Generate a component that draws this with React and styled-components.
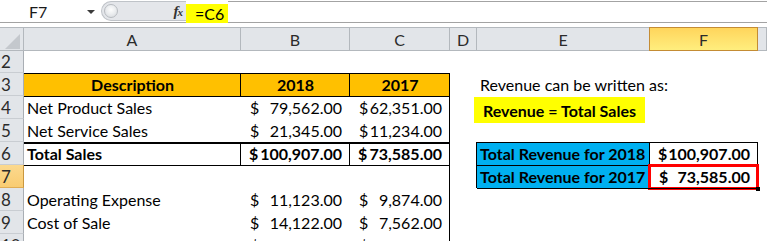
import React from "react"
import styled, { createGlobalStyle, css } from "styled-components"

const GlobalStyle = createGlobalStyle`
  html, body {
    margin: 0;
    padding: 0;
    background: #fff;
    overflow: hidden;
  }
  body {
    font-family: Lato, "Liberation Sans", sans-serif;
    color: #000;
  }
  * { box-sizing: border-box; }
`

const Window = styled.div`
  width: 767px;
  height: 241px;
  overflow: hidden;
  background: #fff;
`

/* ---------- formula bar ---------- */

const FormulaBar = styled.div`
  display: flex;
  height: 23px;
  margin-bottom: 4px;
  border-bottom: 1px solid #a3a3a3;
`

const NameBox = styled.div`
  width: 101px;
  display: flex;
  align-items: center;
  padding-left: 29px;
  font-size: 16px;
  color: #1a1a1a;
`

const DropArrow = styled.span`
  margin-left: auto;
  margin-right: 6px;
  margin-top: 2px;
  border-left: 4px solid transparent;
  border-right: 4px solid transparent;
  border-top: 4px solid #3a3a3a;
`

const FxArea = styled.div`
  width: 85px;
  height: 20px;
  margin-top: 1px;
  display: flex;
  align-items: center;
  justify-content: space-between;
  padding: 0 4px 0 2px;
  background: #e4e6ea;
  border: 1px solid #bfc3c8;
  border-right: none;
  border-radius: 10px 0 0 10px;
`

const Knob = styled.span`
  width: 14px;
  height: 14px;
  border-radius: 50%;
  border: 1px solid #b8bcc1;
  background: radial-gradient(circle at 50% 40%, #fdfdfd 0, #eceef0 45%, #d4d7db 100%);
`

const FxLabel = styled.span`
  font-family: "Liberation Serif", serif;
  font-style: italic;
  font-weight: bold;
  font-size: 15px;
  color: #333;
  letter-spacing: -1px;

  small {
    font-size: 11px;
  }
`

const Formula = styled.div`
  width: 42px;
  height: 19px;
  margin-top: 4px;
  margin-bottom: -1px;
  padding-left: 9px;
  display: flex;
  align-items: center;
  background: #ffff00;
  font-size: 16px;
`

const FormulaRest = styled.div`
  flex: 1;
  margin-top: 1px;
  border-top: 1px solid #a3a3a3;
`

/* ---------- sheet ---------- */

const Sheet = styled.div`
  display: grid;
  grid-template-columns: 24px 217px 109px 100px 27px 173px 108px 9px;
  grid-template-rows: 24px 22px;
  grid-auto-rows: 23px;
`

const headBase = css`
  display: flex;
  align-items: center;
  color: #2b2b2b;
  font-size: 16px;
  background: #e2e5e9;
`

const Corner = styled.div`
  ${headBase};
  justify-content: center;
  border-top: 1px solid #b3b8bd;
  border-right: 1px solid #b3b8bd;
  border-bottom: 1px solid #b3b8bd;
  padding: 4px 3px 0 4px;
`

const ColHead = styled.div`
  ${headBase};
  justify-content: center;
  border-top: 1px solid #b3b8bd;
  border-right: 1px solid #b3b8bd;
  border-bottom: 1px solid #b3b8bd;
  ${p => p.$active && css`
    background: linear-gradient(#ffd55c, #ffee7e);
    border: 1px solid #c48c34;
    margin-left: -1px;
  `}
`

const RowHead = styled.div`
  ${headBase};
  font-size: 17px;
  padding-left: 1px;
  border-right: 1px solid #a9aeb4;
  border-bottom: 1px solid #c9cdd2;
  ${p => p.$active && css`
    background: linear-gradient(#fcd98e, #f9cc72);
    border-right-color: #c9973f;
    border-bottom-color: #e0ad55;
  `}
`

const edges = ({ $top, $right, $left }) => {
  const s = []
  if ($top) s.push(`inset 0 ${$top}px 0 #000`)
  if ($right) s.push("inset -1px 0 0 #000")
  if ($left) s.push("inset 1px 0 0 #000")
  return s.length ? `box-shadow: ${s.join(", ")};` : ""
}

const Cell = styled.div`
  position: relative;
  display: flex;
  align-items: center;
  padding: 0 3px;
  font-size: 16px;
  line-height: 23px;
  white-space: nowrap;
  background: ${p => p.$bg || "transparent"};
  font-weight: ${p => (p.$bold ? 700 : 400)};
  justify-content: ${p => (p.$center ? "center" : "flex-start")};
  ${edges};
`

const Money = styled(Cell)`
  justify-content: space-between;
  padding: 0 8px 0 9px;
  ${p => p.$bold && css`padding-left: 8px;`}
`

const Selected = styled(Money)`
  padding-left: 9px;

  &::after {
    content: "";
    position: absolute;
    top: -1px;
    left: -2px;
    right: -1px;
    bottom: -2px;
    border: 3px solid #ff0000;
  }
  &::before {
    content: "";
    position: absolute;
    right: -2px;
    bottom: -3px;
    width: 4px;
    height: 4px;
    background: #000;
    z-index: 1;
  }
`

const Callout = styled.span`
  align-self: flex-start;
  margin: 1px 0 0 -6px;
  width: 171px;
  height: 26px;
  padding-left: 9px;
  display: flex;
  align-items: center;
  background: #ffff00;
  font-weight: 700;
`

const Amount = ({ value }) => (
  <>
    <span>$</span>
    <span>{value}</span>
  </>
)

const CornerMark = () => (
  <svg width="15" height="15" viewBox="0 0 15 15">
    <polygon points="15,0 15,15 0,15" fill="#c4c8cd" />
  </svg>
)

const Blank = () => (
  <>
    <Cell />
    <Cell />
  </>
)

export default function App() {
  return (
    <Window>
      <GlobalStyle />
      <FormulaBar>
        <NameBox>
          F7
          <DropArrow />
        </NameBox>
        <FxArea>
          <Knob />
          <FxLabel>
            f<small>x</small>
          </FxLabel>
        </FxArea>
        <Formula>=C6</Formula>
        <FormulaRest />
      </FormulaBar>

      <Sheet>
        <Corner>
          <CornerMark />
        </Corner>
        <ColHead>A</ColHead>
        <ColHead>B</ColHead>
        <ColHead>C</ColHead>
        <ColHead>D</ColHead>
        <ColHead>E</ColHead>
        <ColHead $active>F</ColHead>
        <ColHead />

        {/* row 2 */}
        <RowHead>2</RowHead>
        <Cell />
        <Cell />
        <Cell />
        <Cell />
        <Blank />
        <Cell />

        {/* row 3 */}
        <RowHead>3</RowHead>
        <Cell $bg="#ffc000" $bold $center $top={1} $right>Description</Cell>
        <Cell $bg="#ffc000" $bold $center $top={1} $right>2018</Cell>
        <Cell $bg="#ffc000" $bold $center $top={1} $right>2017</Cell>
        <Cell />
        <Cell>Revenue can be written as:</Cell>
        <Cell />
        <Cell />

        {/* row 4 */}
        <RowHead>4</RowHead>
        <Cell $top={1}>Net Product Sales</Cell>
        <Money $top={1}><Amount value="79,562.00" /></Money>
        <Money $top={1} $right><Amount value="62,351.00" /></Money>
        <Cell />
        <Cell>
          <Callout>Revenue = Total Sales</Callout>
        </Cell>
        <Cell />
        <Cell />

        {/* row 5 */}
        <RowHead>5</RowHead>
        <Cell>Net Service Sales</Cell>
        <Money><Amount value="21,345.00" /></Money>
        <Money $right><Amount value="11,234.00" /></Money>
        <Cell />
        <Blank />
        <Cell />

        {/* row 6 */}
        <RowHead>6</RowHead>
        <Cell $bold $top={2} $right>Total Sales</Cell>
        <Money $bold $top={2} $right><Amount value="100,907.00" /></Money>
        <Money $bold $top={2} $right><Amount value="73,585.00" /></Money>
        <Cell $right />
        <Cell $bg="#00b0f0" $bold $top={1} $right>Total Revenue for 2018</Cell>
        <Money $bold $top={1} $right><Amount value="100,907.00" /></Money>
        <Cell />

        {/* row 7 */}
        <RowHead $active>7</RowHead>
        <Cell $top={1} />
        <Cell $top={1} />
        <Cell $top={1} $right />
        <Cell $right />
        <Cell $bg="#00b0f0" $bold $top={1} $right>Total Revenue for 2017</Cell>
        <Selected $bold $top={1} $right><Amount value="73,585.00" /></Selected>
        <Cell />

        {/* row 8 */}
        <RowHead>8</RowHead>
        <Cell>Operating Expense</Cell>
        <Money><Amount value="11,123.00" /></Money>
        <Money $right><Amount value="9,874.00" /></Money>
        <Cell />
        <Cell $top={1} />
        <Cell $top={1} />
        <Cell />

        {/* row 9 */}
        <RowHead>9</RowHead>
        <Cell>Cost of Sale</Cell>
        <Money><Amount value="14,122.00" /></Money>
        <Money $right><Amount value="7,562.00" /></Money>
        <Cell />
        <Blank />
        <Cell />

        {/* row 10 */}
        <RowHead>10</RowHead>
        <Cell />
        <Money><Amount value="25,245.00" /></Money>
        <Money $right><Amount value="17,436.00" /></Money>
        <Cell />
        <Blank />
        <Cell />
      </Sheet>
    </Window>
  )
}
